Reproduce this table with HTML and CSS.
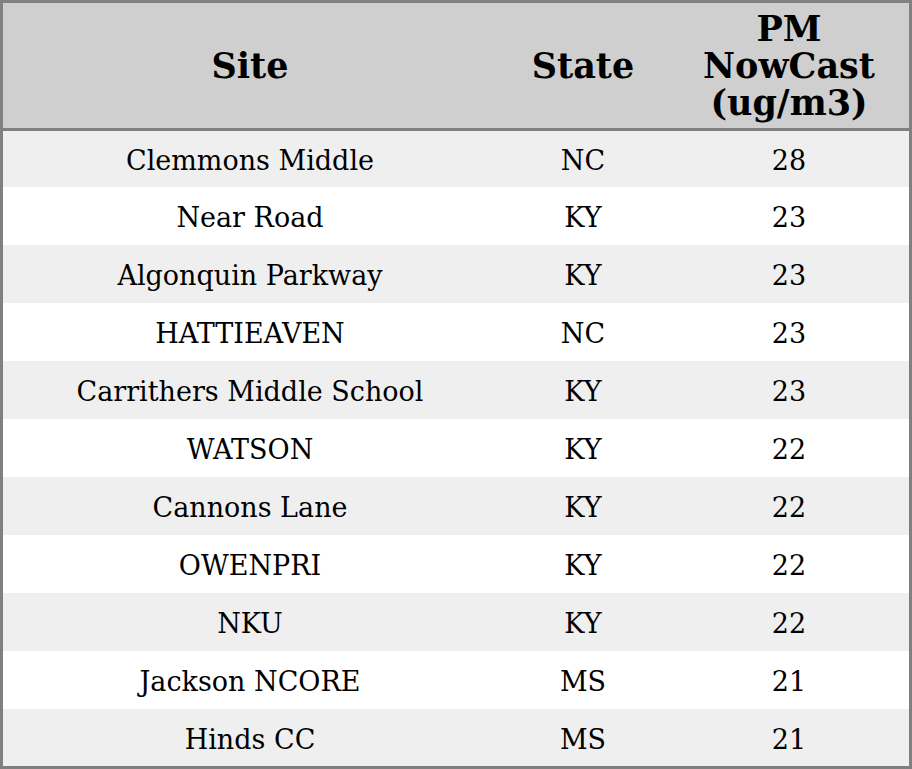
FILE: index.html
```html
<!DOCTYPE html>
<html>
<head>
<meta charset="utf-8">
<link rel="stylesheet" href="styles.css">
</head>
<body>
<table class="aq">
  <colgroup>
    <col class="c-site">
    <col class="c-state">
    <col class="c-pm">
  </colgroup>
  <thead>
    <tr><th>Site</th><th>State</th><th>PM<br>NowCast<br>(ug/m3)</th></tr>
  </thead>
  <tbody>
    <tr><td>Clemmons Middle</td><td>NC</td><td>28</td></tr>
    <tr><td>Near Road</td><td>KY</td><td>23</td></tr>
    <tr><td>Algonquin Parkway</td><td>KY</td><td>23</td></tr>
    <tr><td>HATTIEAVEN</td><td>NC</td><td>23</td></tr>
    <tr><td>Carrithers Middle School</td><td>KY</td><td>23</td></tr>
    <tr><td>WATSON</td><td>KY</td><td>22</td></tr>
    <tr><td>Cannons Lane</td><td>KY</td><td>22</td></tr>
    <tr><td>OWENPRI</td><td>KY</td><td>22</td></tr>
    <tr><td>NKU</td><td>KY</td><td>22</td></tr>
    <tr><td>Jackson NCORE</td><td>MS</td><td>21</td></tr>
    <tr><td>Hinds CC</td><td>MS</td><td>21</td></tr>
  </tbody>
</table>
</body>
</html>
```
FILE: styles.css
```css
html, body {
  margin: 0;
  padding: 0;
  background: #ffffff;
}
.aq {
  width: 912px;
  border-collapse: separate;
  border-spacing: 0;
  border: 3px solid #808080;
  font-family: "DejaVu Serif", serif;
  color: #000;
  table-layout: fixed;
}
.c-site { width: 494px; }
.c-state { width: 172px; }
.c-pm { width: 240px; }
.aq th {
  background: #cfcfcf;
  font-weight: bold;
  font-size: 35px;
  line-height: 37px;
  height: 125px;
  padding: 0;
  text-align: center;
  vertical-align: middle;
  border-bottom: 3px solid #808080;
}
.aq td {
  font-size: 27px;
  line-height: 32px;
  height: 58px;
  padding: 4px 0 0;
  text-align: center;
  vertical-align: middle;
  box-sizing: border-box;
}
.aq tbody tr:first-child td {
  height: 56px;
}
.aq tbody tr:last-child td {
  height: 57px;
}
.aq tbody tr:nth-child(odd) td {
  background: #efefef;
}
```
